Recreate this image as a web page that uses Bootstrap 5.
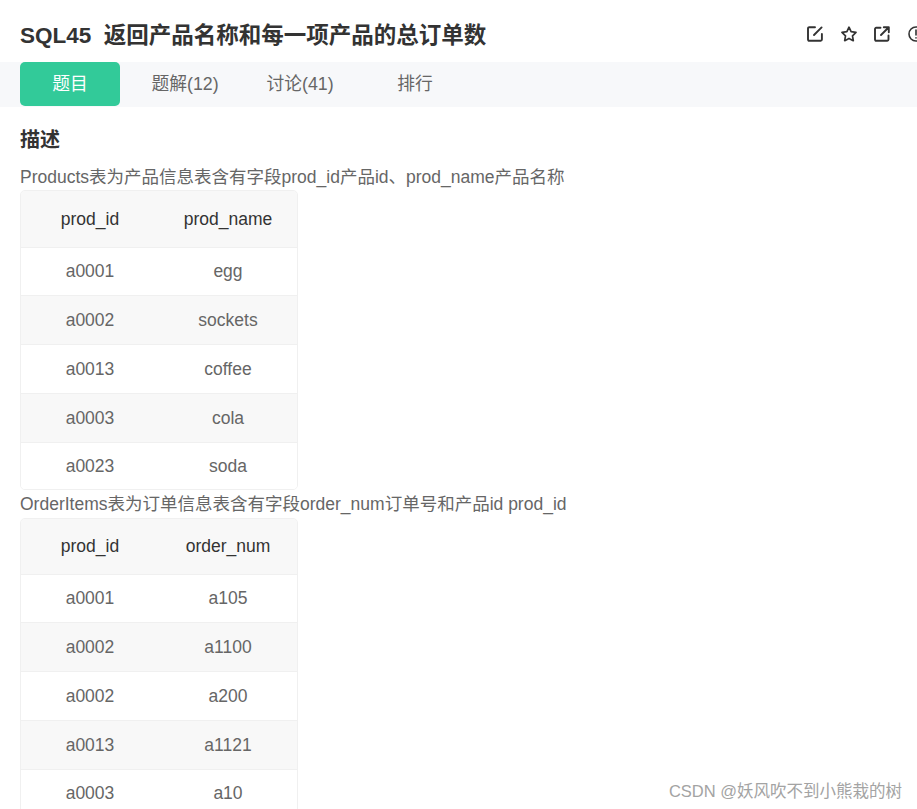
<!DOCTYPE html>
<html lang="zh">
<head>
<meta charset="utf-8">
<title>SQL45</title>
<link rel="stylesheet" href="https://cdn.jsdelivr.net/npm/bootstrap@5.3.0/dist/css/bootstrap.min.css">
<style>
html,body{height:809px;overflow:hidden;background:#fff}
body{font-family:"Liberation Sans","Noto Sans CJK SC",sans-serif;font-size:17.5px;color:#666}
.qhead{height:62px;padding:0 0 0 20px;overflow:hidden}
.qtitle{font-size:22.5px;font-weight:700;color:#333;margin:0;white-space:pre;line-height:35px;padding-top:18px;height:62px}
.qicons{gap:17.6px;padding-top:26px;width:110px;flex:none}
.qicons svg{width:16px;height:16px;flex:none;display:block}
.qtabs{background:#f7f8fa;height:45px;padding-left:20px}
.qtab{width:100px;height:44px;line-height:44px;text-align:center;color:#666;margin-right:15px;white-space:nowrap;flex:none;font-size:17.8px}
.qtab.on{background:#32ca99;color:#fff;border-radius:5px}
.qbody{padding:0 20px}
.qsec{font-size:20px;font-weight:700;color:#333;line-height:28px;margin:19px 0 11px;height:28px}
.qline{line-height:25px;margin:0;white-space:nowrap}
.qgrid{width:278px;border:1px solid #f0f0f0;border-radius:5px;overflow:hidden;margin:0;display:block}
.qgrid table{width:276px;table-layout:fixed;margin:0;font-size:17.5px}
.qgrid th,.qgrid td{padding:0;text-align:center;vertical-align:middle;border:0;border-bottom:1px solid #f0f0f0;color:#666;background:#fff;box-shadow:none}
.qgrid th{height:56px;font-weight:400;color:#333;background:#f8f8f8}
.qgrid td{height:48.9px}
.qgrid tr.alt td{background:#f8f8f8}
.qgrid tr:last-child td{border-bottom:0;height:46px}
.qgrid.qshort th{height:55.5px}
.qgap2{margin-top:2px}
.qgap1{margin-top:1px}
.qmark{position:absolute;right:15px;top:780px;font-size:16.5px;line-height:22px;color:#a3a3a3;white-space:nowrap}
</style>
</head>
<body class="position-relative">
<div class="qhead d-flex justify-content-between">
  <h1 class="qtitle">SQL45  返回产品名称和每一项产品的总订单数</h1>
  <div class="qicons d-flex align-items-start">
    <svg viewBox="0 0 16 16" fill="none" stroke="#333" stroke-width="1.9" stroke-linecap="round" stroke-linejoin="round"><path d="M8 1.2H2.3A1.2 1.2 0 0 0 1 2.4v11.2a1.2 1.2 0 0 0 1.3 1.2h11.4a1.2 1.2 0 0 0 1.2-1.2V8"/><path d="M7 9l7.6-7.6"/></svg>
    <svg viewBox="0 0 16 16" fill="none" stroke="#333" stroke-width="1.7" stroke-linejoin="round"><path d="M8 1.2l2.1 4.5 4.9.7-3.5 3.4.8 4.9L8 12.4l-4.3 2.3.8-4.9L1 6.4l4.9-.7z"/></svg>
    <svg viewBox="0 0 16 16" fill="none" stroke="#333" stroke-width="1.9" stroke-linecap="round" stroke-linejoin="round"><path d="M6.5 1.8H2.3A1.2 1.2 0 0 0 1 3v10.6a1.2 1.2 0 0 0 1.3 1.2h11a1.2 1.2 0 0 0 1.2-1.2V9.5"/><path d="M7 9l7.5-7.5M9.8 1.2h5v5"/></svg>
    <svg viewBox="0 0 16 16" fill="none" stroke="#333" stroke-width="1.6" stroke-linecap="round"><circle cx="8" cy="8" r="7"/><path d="M8 4v5M8 11.7v.3"/></svg>
  </div>
</div>
<div class="qtabs d-flex">
  <div class="qtab on">题目</div>
  <div class="qtab">题解(12)</div>
  <div class="qtab">讨论(41)</div>
  <div class="qtab">排行</div>
</div>
<div class="qbody">
  <div class="qsec">描述</div>
  <p class="qline">Products表为产品信息表含有字段prod_id产品id、prod_name产品名称</p>
  <div class="qgrid">
    <table class="table">
      <thead><tr><th>prod_id</th><th>prod_name</th></tr></thead>
      <tbody>
        <tr><td>a0001</td><td>egg</td></tr>
        <tr class="alt"><td>a0002</td><td>sockets</td></tr>
        <tr><td>a0013</td><td>coffee</td></tr>
        <tr class="alt"><td>a0003</td><td>cola</td></tr>
        <tr><td>a0023</td><td>soda</td></tr>
      </tbody>
    </table>
  </div>
  <p class="qline qgap2">OrderItems表为订单信息表含有字段order_num订单号和产品id prod_id</p>
  <div class="qgrid qshort qgap1">
    <table class="table">
      <thead><tr><th>prod_id</th><th>order_num</th></tr></thead>
      <tbody>
        <tr><td>a0001</td><td>a105</td></tr>
        <tr class="alt"><td>a0002</td><td>a1100</td></tr>
        <tr><td>a0002</td><td>a200</td></tr>
        <tr class="alt"><td>a0013</td><td>a1121</td></tr>
        <tr><td>a0003</td><td>a10</td></tr>
      </tbody>
    </table>
  </div>
</div>
<div class="qmark">CSDN @妖风吹不到小熊栽的树</div>
</body>
</html>
